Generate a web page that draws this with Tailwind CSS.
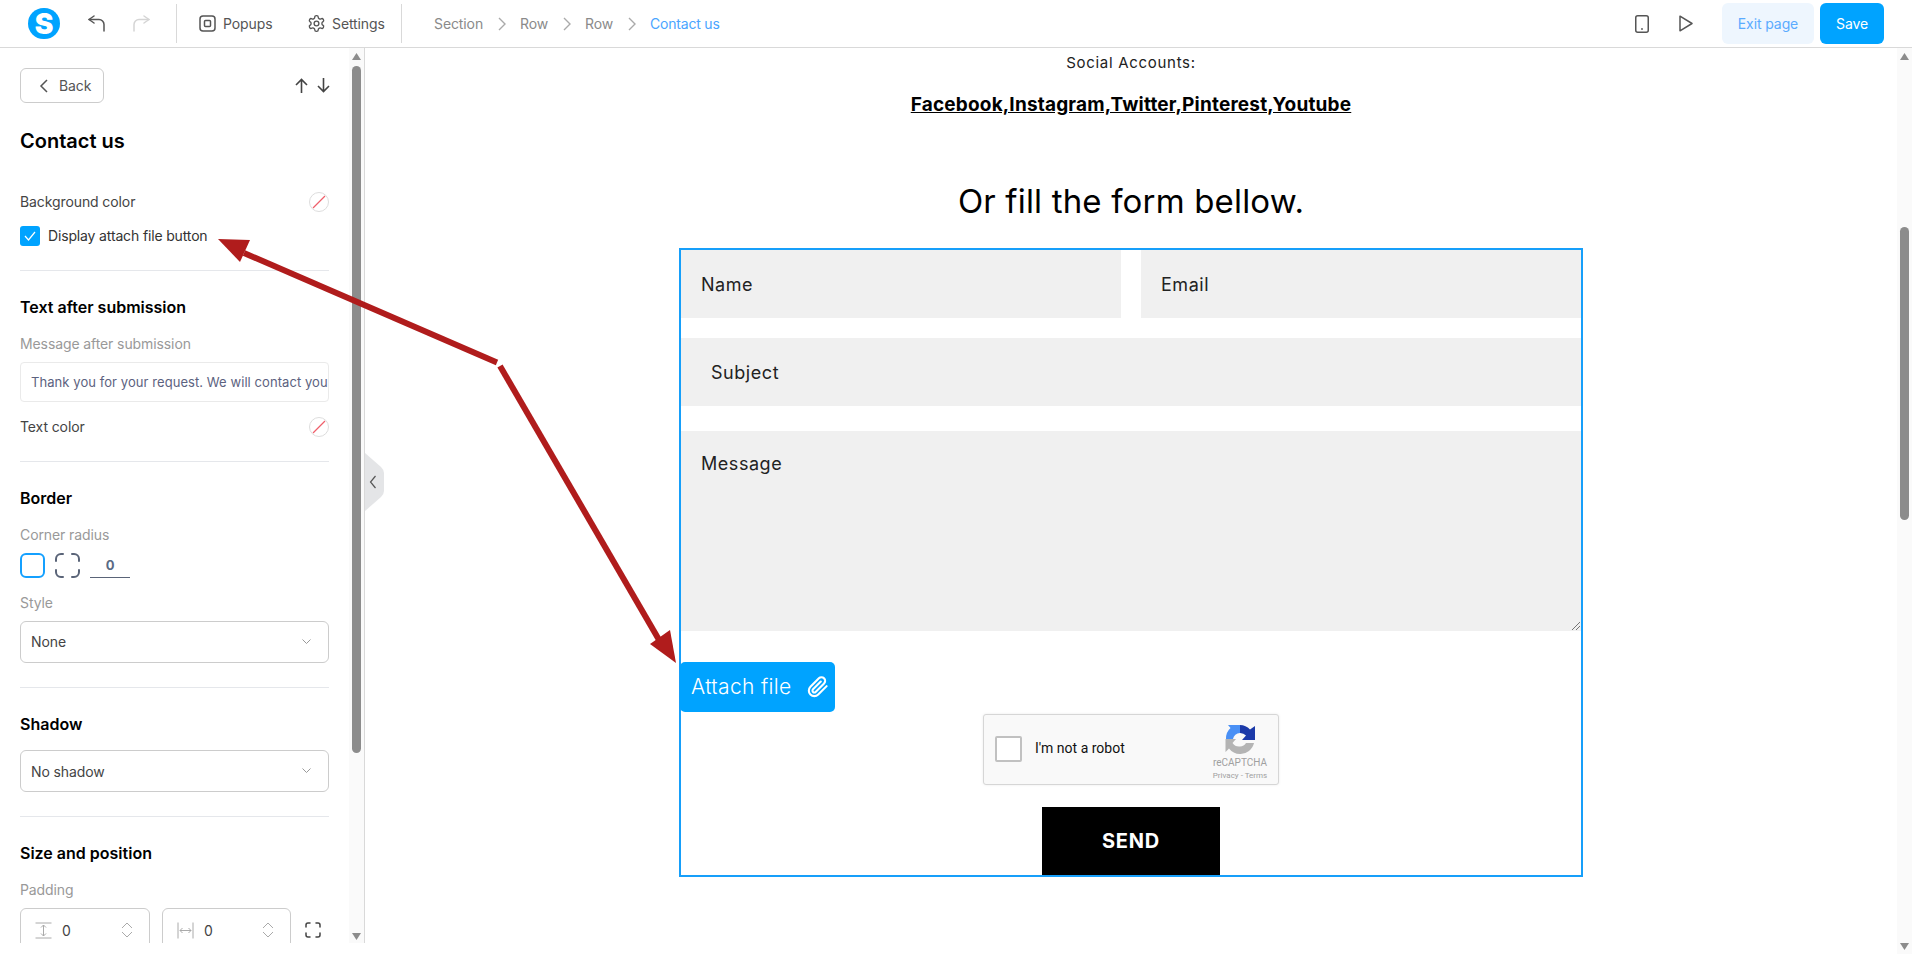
<!DOCTYPE html>
<html lang="en">
<head>
<meta charset="utf-8">
<title>Contact us editor</title>
<script src="https://cdn.jsdelivr.net/npm/@tailwindcss/browser@4"></script>
</head>
<body class="relative w-[1912px] h-[954px] overflow-hidden bg-white font-['Inter',sans-serif] text-[#444]">
<header class="flex items-center h-[48px] border-b border-[#d9d9d9] text-[14px] tracking-[-0.1px]">
  <div class="ml-[28px] w-[32px] h-[31px] rounded-full bg-[#00a3ff] flex items-center justify-center text-white font-black text-[28px] leading-none">S</div>
  <svg class="ml-[27px] w-[20px] h-[18px]" viewBox="0 0 20 18" fill="none" stroke="#555" stroke-width="1.5" stroke-linecap="round" stroke-linejoin="round"><path d="M7 8 2 4.5 7 1"/><path d="M2 4.5h10a5 5 0 0 1 5 5V16"/></svg>
  <svg class="ml-[24px] w-[20px] h-[18px]" viewBox="0 0 20 18" fill="none" stroke="#d5d5d5" stroke-width="1.5" stroke-linecap="round" stroke-linejoin="round"><path d="M13 8l5-3.5L13 1"/><path d="M18 4.5H8a5 5 0 0 0-5 5V16"/></svg>
  <div class="ml-[25px] w-px h-[39px] bg-[#d9d9d9]"></div>
  <svg class="ml-[22px] w-[17px] h-[17px]" viewBox="0 0 17 17" fill="none" stroke="#555" stroke-width="1.5"><rect x="1" y="1" width="15" height="15" rx="3"/><rect x="5.5" y="5.5" width="6" height="6" rx="1"/></svg>
  <span class="ml-[7px] w-[49px] text-[#555]">Popups</span>
  <svg class="ml-[35px] w-[19px] h-[19px]" viewBox="0 0 24 24" fill="none" stroke="#555" stroke-width="1.7" stroke-linecap="round" stroke-linejoin="round"><path d="M12.22 2h-.44a2 2 0 0 0-2 2v.18a2 2 0 0 1-1 1.73l-.43.25a2 2 0 0 1-2 0l-.15-.08a2 2 0 0 0-2.73.73l-.22.38a2 2 0 0 0 .73 2.73l.15.1a2 2 0 0 1 1 1.72v.51a2 2 0 0 1-1 1.74l-.15.09a2 2 0 0 0-.73 2.73l.22.38a2 2 0 0 0 2.73.73l.15-.08a2 2 0 0 1 2 0l.43.25a2 2 0 0 1 1 1.73V20a2 2 0 0 0 2 2h.44a2 2 0 0 0 2-2v-.18a2 2 0 0 1 1-1.73l.43-.25a2 2 0 0 1 2 0l.15.08a2 2 0 0 0 2.73-.73l.22-.39a2 2 0 0 0-.73-2.73l-.15-.08a2 2 0 0 1-1-1.74v-.5a2 2 0 0 1 1-1.74l.15-.09a2 2 0 0 0 .73-2.73l-.22-.38a2 2 0 0 0-2.73-.73l-.15.08a2 2 0 0 1-2 0l-.43-.25a2 2 0 0 1-1-1.73V4a2 2 0 0 0-2-2z"/><circle cx="12" cy="12" r="3"/></svg>
  <span class="ml-[6px] w-[54px] text-[#555]">Settings</span>
  <div class="ml-[15px] w-px h-[39px] bg-[#d9d9d9]"></div>
  <span class="ml-[32px] w-[49px] text-[#8a8a8a]">Section</span>
  <svg class="ml-[15px] w-[9px] h-[14px]" viewBox="0 0 9 14" fill="none" stroke="#aaa" stroke-width="1.4"><path d="M1 1l6 6-6 6"/></svg>
  <span class="ml-[13px] w-[28px] text-[#8a8a8a]">Row</span>
  <svg class="ml-[15px] w-[9px] h-[14px]" viewBox="0 0 9 14" fill="none" stroke="#aaa" stroke-width="1.4"><path d="M1 1l6 6-6 6"/></svg>
  <span class="ml-[13px] w-[28px] text-[#8a8a8a]">Row</span>
  <svg class="ml-[15px] w-[9px] h-[14px]" viewBox="0 0 9 14" fill="none" stroke="#aaa" stroke-width="1.4"><path d="M1 1l6 6-6 6"/></svg>
  <span class="ml-[13px] text-[#4aa5ff] tracking-[-0.2px]">Contact us</span>
  <svg class="ml-auto w-[14px] h-[18px]" viewBox="0 0 14 18" fill="none" stroke="#555" stroke-width="1.5"><rect x="0.75" y="0.75" width="12.5" height="16.5" rx="2"/><circle cx="7" cy="14" r="0.9" fill="#555" stroke="none"/></svg>
  <svg class="ml-[30px] w-[14px] h-[17px]" viewBox="0 0 14 17" fill="none" stroke="#555" stroke-width="1.5" stroke-linejoin="round"><path d="M1 1.2v14.6L13 8.5z"/></svg>
  <div class="ml-[29px] w-[92px] h-[41px] rounded-[6px] bg-[#eef6fe] text-[#5aabff] flex items-center justify-center">Exit page</div>
  <div class="ml-[6px] mr-[28px] w-[64px] h-[41px] rounded-[6px] bg-[#00a3ff] text-white flex items-center justify-center">Save</div>
</header>

<div class="flex items-start h-[906px]">
  <aside class="flex w-[365px] h-[895px] border-r border-[#d9d9d9] overflow-hidden">
    <div class="w-[349px] pl-[20px] pr-[20px] pt-[20px] shrink-0 text-[14px] tracking-[-0.1px]">
      <div class="flex items-center justify-between">
        <div class="w-[84px] h-[35px] border border-[#ccc] rounded-[6px] flex items-center text-[#555]">
          <svg class="ml-[18px] w-[9px] h-[14px]" viewBox="0 0 9 14" fill="none" stroke="#555" stroke-width="1.5"><path d="M8 1L2 7l6 6"/></svg>
          <span class="ml-[11px]">Back</span>
        </div>
        <div class="flex items-center gap-[9px] -mr-px">
          <svg class="w-[13px] h-[15px]" viewBox="0 0 13 15" fill="none" stroke="#444" stroke-width="1.6"><path d="M6.5 15V1.5M1 7l5.5-5.5L12 7"/></svg>
          <svg class="w-[13px] h-[15px]" viewBox="0 0 13 15" fill="none" stroke="#444" stroke-width="1.6"><path d="M6.5 0v13.5M1 8l5.5 5.5L12 8"/></svg>
        </div>
      </div>
      <h1 class="mt-[24px] h-[28px] leading-[28px] text-[20px] font-semibold tracking-normal text-black">Contact us</h1>
      <div class="mt-[37px] h-[20px] flex items-center justify-between">
        <span class="pb-[2px]">Background color</span>
        <svg class="w-[20px] h-[20px]" viewBox="0 0 20 20" fill="none"><circle cx="10" cy="10" r="9.5" stroke="#ddd"/><path d="M4 16L16 4" stroke="#ef5f6b" stroke-width="1.2"/></svg>
      </div>
      <div class="mt-[14px] h-[20px] flex items-center">
        <div class="w-[20px] h-[20px] rounded-[3px] bg-[#00a3ff] flex items-center justify-center">
          <svg class="w-[12px] h-[10px]" viewBox="0 0 12 10" fill="none" stroke="#fff" stroke-width="1.2"><path d="M1 5l3.5 4L11 1"/></svg>
        </div>
        <span class="ml-[8px] pb-[2px] text-[#333] tracking-[-0.15px]">Display attach file button</span>
      </div>
      <div class="mt-[24px] h-px bg-[#e5e7eb]"></div>

      <h2 class="mt-[24px] h-[24px] leading-[24px] text-[16px] font-semibold tracking-normal text-black">Text after submission</h2>
      <div class="mt-[15px] h-[20px] leading-[20px] text-[#999]">Message after submission</div>
      <div class="mt-[8px] h-[40px] border border-[#eaeaea] rounded-[4px] pl-[10px] pt-[2px] flex items-center overflow-hidden whitespace-nowrap text-[13px] tracking-[0.07px] text-[#5c6280]">Thank you for your request. We will contact you soon.</div>
      <div class="mt-[15px] h-[20px] flex items-center justify-between">
        <span class="pb-[2px]">Text color</span>
        <svg class="w-[20px] h-[20px]" viewBox="0 0 20 20" fill="none"><circle cx="10" cy="10" r="9.5" stroke="#ddd"/><path d="M4 16L16 4" stroke="#ef5f6b" stroke-width="1.2"/></svg>
      </div>
      <div class="mt-[24px] h-px bg-[#e5e7eb]"></div>

      <h2 class="mt-[24px] h-[24px] leading-[24px] text-[16px] font-semibold tracking-normal text-black">Border</h2>
      <div class="mt-[15px] h-[20px] leading-[20px] text-[#999]">Corner radius</div>
      <div class="mt-[8px] h-[25px] flex items-center">
        <div class="w-[25px] h-[25px] rounded-[6px] border-[2px] border-[#14a0ff]"></div>
        <svg class="ml-[10px] w-[25px] h-[25px]" viewBox="0 0 25 25" fill="none" stroke="#5a6478" stroke-width="2" stroke-linecap="round"><path d="M1 8V6a5 5 0 0 1 5-5h2M17 1h2a5 5 0 0 1 5 5v2M24 17v2a5 5 0 0 1-5 5h-2M8 24H6a5 5 0 0 1-5-5v-2"/></svg>
        <div class="ml-[10px] w-[40px] h-[25px] pt-[2px] border-b border-[#5a6478] flex items-center justify-center text-[13px] font-bold text-[#5a6a85]">0</div>
      </div>
      <div class="mt-[15px] h-[20px] leading-[20px] text-[#999]">Style</div>
      <div class="mt-[8px] h-[42px] border border-[#ccc] rounded-[6px] px-[10px] flex items-center justify-between">
        <span class="pb-[2px]">None</span>
        <svg class="mr-[7px] w-[9px] h-[6px]" viewBox="0 0 9 6" fill="none" stroke="#999"><path d="M0.5 0.5L4.5 4.5 8.5 0.5"/></svg>
      </div>
      <div class="mt-[24px] h-px bg-[#e5e7eb]"></div>

      <h2 class="mt-[24px] h-[24px] leading-[24px] text-[16px] font-semibold tracking-normal text-black">Shadow</h2>
      <div class="mt-[14px] h-[42px] border border-[#ccc] rounded-[6px] px-[10px] flex items-center justify-between">
        <span>No shadow</span>
        <svg class="mr-[7px] w-[9px] h-[6px]" viewBox="0 0 9 6" fill="none" stroke="#999"><path d="M0.5 0.5L4.5 4.5 8.5 0.5"/></svg>
      </div>
      <div class="mt-[24px] h-px bg-[#e5e7eb]"></div>

      <h2 class="mt-[24px] h-[24px] leading-[24px] text-[16px] font-semibold tracking-normal text-black">Size and position</h2>
      <div class="mt-[15px] h-[20px] leading-[20px] text-[#999]">Padding</div>
      <div class="mt-[8px] flex items-start">
        <div class="w-[130px] h-[44px] border border-[#ccc] rounded-[6px] flex items-center">
          <svg class="ml-[14px] w-[17px] h-[17px]" viewBox="0 0 17 17" fill="none" stroke="#aaa"><path d="M0.5 1h16M0.5 16h16M8.5 3v11M6 5.5l2.5-2.5L11 5.5M6 11.5L8.5 14l2.5-2.5"/></svg>
          <span class="ml-[10px]">0</span>
          <svg class="ml-auto mr-[16px] w-[12px] h-[16px]" viewBox="0 0 12 16" fill="none" stroke="#aaa"><path d="M1 6l5-5 5 5M1 10l5 5 5-5"/></svg>
        </div>
        <div class="ml-[12px] w-[129px] h-[44px] border border-[#ccc] rounded-[6px] flex items-center">
          <svg class="ml-[14px] w-[17px] h-[17px]" viewBox="0 0 17 17" fill="none" stroke="#aaa"><path d="M1 0.5v16M16 0.5v16M3 8.5h11M5.5 6L3 8.5 5.5 11M11.5 6L14 8.5 11.5 11"/></svg>
          <span class="ml-[10px]">0</span>
          <svg class="ml-auto mr-[16px] w-[12px] h-[16px]" viewBox="0 0 12 16" fill="none" stroke="#aaa"><path d="M1 6l5-5 5 5M1 10l5 5 5-5"/></svg>
        </div>
        <svg class="ml-[14px] mt-[14px] w-[16px] h-[16px]" viewBox="0 0 16 16" fill="none" stroke="#444" stroke-width="1.5" stroke-linecap="round"><path d="M1 5V3a2 2 0 0 1 2-2h2M11 1h2a2 2 0 0 1 2 2v2M15 11v2a2 2 0 0 1-2 2h-2M5 15H3a2 2 0 0 1-2-2v-2"/></svg>
      </div>
    </div>
    <div class="w-[15px] h-full bg-[#fafafa] pl-[3px] pt-[5px] shrink-0">
      <svg class="block w-[9px] h-[7px]" viewBox="0 0 9 7" fill="#8c8c8c"><path d="M4.5 0L9 7H0z"/></svg>
      <div class="mt-[6px] w-[9px] h-[687px] rounded-full bg-[#8c8c8c]"></div>
      <svg class="block mt-[180px] w-[9px] h-[7px]" viewBox="0 0 9 7" fill="#8c8c8c"><path d="M4.5 7L9 0H0z"/></svg>
    </div>
  </aside>

  <main class="w-[1532px] h-[906px] shrink-0 pt-[5px] text-black flex flex-col items-center overflow-hidden">
    <p class="h-[20px] leading-[20px] text-[15px] tracking-[0.7px] text-[#222]">Social Accounts:</p>
    <p class="mt-[20px] h-[24px] leading-[24px] text-[19px] font-bold underline tracking-[0.18px]">Facebook,Instagram,Twitter,Pinterest,Youtube</p>
    <h2 class="mt-[64px] h-[40px] leading-[40px] text-[33px] tracking-[0.17px]">Or fill the form bellow.</h2>
    <form class="mt-[27px] w-[904px] h-[629px] border-[2px] border-[#169ffa] flex flex-col text-[18px] tracking-[0.55px] text-[#222] shrink-0">
      <div class="flex gap-[20px]">
        <div class="flex-1 h-[68px] bg-[#f0f0f0] pl-[20px] flex items-center">Name</div>
        <div class="flex-1 h-[68px] bg-[#f0f0f0] pl-[20px] flex items-center">Email</div>
      </div>
      <div class="mt-[20px] h-[68px] bg-[#f0f0f0] pl-[30px] flex items-center">Subject</div>
      <div class="relative mt-[25px] h-[200px] bg-[#f0f0f0] pl-[20px] pt-[21px] leading-[24px]">
        Message
        <svg class="absolute right-[1px] bottom-[1px] w-[8px] h-[8px]" viewBox="0 0 8 8" fill="none" stroke="#555" stroke-width="0.8"><path d="M0 8L8 0M4 8l4-4"/></svg>
      </div>
      <div class="mt-[31px] -ml-px w-[155px] h-[50px] rounded-[5px] bg-[#00a3ff] text-white text-[21px] font-light tracking-[0.35px] flex items-center pl-[11px] shrink-0">
        <span>Attach file</span>
        <svg class="ml-[15px] w-[22px] h-[22px]" viewBox="0 0 24 24" fill="none" stroke="#fff" stroke-width="2.3" stroke-linecap="round" stroke-linejoin="round"><path d="M21.44 11.05l-9.19 9.19a6 6 0 0 1-8.49-8.49l9.19-9.19a4 4 0 0 1 5.66 5.66l-9.2 9.19a2 2 0 0 1-2.83-2.83l8.49-8.48"/></svg>
      </div>
      <div class="mt-[2px] mx-auto w-[296px] h-[71px] bg-[#f9f9f9] border border-[#d6d6d6] rounded-[3px] shadow-[0_0_3px_rgba(0,0,0,0.08)] flex items-center font-['Roboto',sans-serif] tracking-normal shrink-0">
        <div class="ml-[11px] -mt-[2px] w-[27px] h-[26px] bg-white border-[2px] border-[#c1c1c1] rounded-[2px]"></div>
        <span class="ml-[13px] -mt-[2px] text-[14px] text-[#111]">I'm not a robot</span>
        <div class="ml-auto mr-[10px] mt-[6px] w-[56px] flex flex-col items-center">
          <svg class="w-[30px] h-[29px]" viewBox="0 0 30 29"><path d="M15 0A14 14 0 0 1 25 4.500L30 1V15H17L21 10.500A8 8 0 0 0 15 8Z" fill="#1c3aa9"/><path d="M15 0H3L5.500 3A14 14 0 0 0 1 14H8A7 7 0 0 1 15 8Z" fill="#4a90f5"/><path d="M0.500 14H11L7.500 18A8 8 0 0 0 15 21.500A7 7 0 0 0 21 18H29A14 14 0 0 1 15 29A14 14 0 0 1 4 23.500L0.500 27Z" fill="#b4b4b4"/></svg>
          <span class="text-[10px] leading-[12px] mt-[3px] text-[#a0a0a0]">reCAPTCHA</span>
          <span class="text-[8px] leading-[11px] mt-[1px] text-[#a0a0a0] whitespace-nowrap">Privacy - Terms</span>
        </div>
      </div>
      <div class="mt-[22px] mx-auto w-[178px] h-[68px] bg-black text-white text-[20px] font-bold tracking-[0.8px] flex items-center justify-center shrink-0">SEND</div>
    </form>
  </main>

  <div class="w-[15px] h-[906px] bg-[#fafafa] pl-[3px] pt-[5px] shrink-0">
    <svg class="block w-[9px] h-[7px]" viewBox="0 0 9 7" fill="#8c8c8c"><path d="M4.5 0L9 7H0z"/></svg>
    <div class="mt-[167px] w-[9px] h-[293px] rounded-full bg-[#8c8c8c]"></div>
    <svg class="block mt-[423px] w-[9px] h-[7px]" viewBox="0 0 9 7" fill="#8c8c8c"><path d="M4.5 7L9 0H0z"/></svg>
  </div>
</div>

<svg class="absolute left-[365px] top-[453px] w-[19px] h-[58px]" viewBox="0 0 19 58"><path d="M0 0L16 14Q19 17 19 20V38Q19 41 16 44L0 58z" fill="#e4e5e7"/><path d="M10.500 23L5.500 29l5 6" fill="none" stroke="#555" stroke-width="1.2"/></svg>

<svg class="absolute left-0 top-0 w-[1912px] h-[954px] pointer-events-none" viewBox="0 0 1912 954" fill="#b01c1c">
  <path d="M497 362.500L244 253" stroke="#b01c1c" stroke-width="6"/>
  <path d="M218 239L250 240L240 262Z"/>
  <path d="M500 366L662 645" stroke="#b01c1c" stroke-width="6"/>
  <path d="M676 663L670 630L650 644Z"/>
</svg>
</body>
</html>
